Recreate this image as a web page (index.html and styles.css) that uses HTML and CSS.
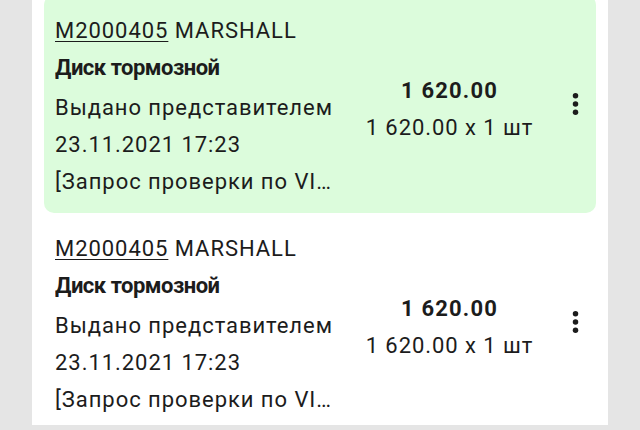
FILE: index.html
```html
<!DOCTYPE html>
<html lang="ru">
<head>
<meta charset="utf-8">
<link rel="stylesheet" href="styles.css">
</head>
<body>
<div class="panel">
  <div class="item item--active">
    <div class="info">
      <div class="line"><span class="code">M2000405</span> MARSHALL</div>
      <div class="line title">Диск тормозной</div>
      <div class="line">Выдано представителем</div>
      <div class="line">23.11.2021 17:23</div>
      <div class="line clip">[Запрос проверки по VI…</div>
    </div>
    <div class="price">
      <div class="total">1 620.00</div>
      <div class="unit">1 620.00 x 1 шт</div>
    </div>
    <div class="menu">
      <svg viewBox="0 0 24 24" width="36" height="36"><circle cx="12" cy="6" r="2"/><circle cx="12" cy="12" r="2"/><circle cx="12" cy="18" r="2"/></svg>
    </div>
  </div>
  <div class="item">
    <div class="info">
      <div class="line"><span class="code">M2000405</span> MARSHALL</div>
      <div class="line title">Диск тормозной</div>
      <div class="line">Выдано представителем</div>
      <div class="line">23.11.2021 17:23</div>
      <div class="line clip">[Запрос проверки по VI…</div>
    </div>
    <div class="price">
      <div class="total">1 620.00</div>
      <div class="unit">1 620.00 x 1 шт</div>
    </div>
    <div class="menu">
      <svg viewBox="0 0 24 24" width="36" height="36"><circle cx="12" cy="6" r="2"/><circle cx="12" cy="12" r="2"/><circle cx="12" cy="18" r="2"/></svg>
    </div>
  </div>
</div>
</body>
</html>
```
FILE: styles.css
```css
html, body {
  margin: 0;
  padding: 0;
  height: 100%;
  overflow: hidden;
}
body {
  background: #e5e5e5;
  font-family: Roboto, "Noto Sans", sans-serif;
  color: #1c1c1c;
}
.panel {
  width: 552px;
  margin-left: 32px;
  padding: 0 12px;
  height: 100%;
  background: #ffffff;
  margin-top: -5px;
}
.item {
  display: grid;
  grid-template-columns: 285px 219px 33px;
  align-items: center;
  padding: 17px 4px 13px 11px;
  border-radius: 10px;
}
.item--active {
  background: #dcfcdc;
}
.info {
  display: flex;
  flex-direction: column;
  min-width: 0;
}
.line {
  font-size: 22px;
  line-height: 37px;
  letter-spacing: 0.95px;
  white-space: nowrap;
  overflow: hidden;
  text-overflow: ellipsis;
}
.code {
  text-decoration: underline;
  text-underline-offset: 3px;
  text-decoration-thickness: 1px;
}
.title {
  font-size: 22px;
  font-weight: 700;
  letter-spacing: -0.5px;
  margin-bottom: 3px;
}
.price {
  display: flex;
  flex-direction: column;
  align-items: center;
  padding-top: 6px;
}
.total {
  font-size: 22px;
  line-height: 37px;
  font-weight: 700;
  letter-spacing: 1.2px;
}
.unit {
  font-size: 22px;
  line-height: 37px;
  letter-spacing: 0.95px;
}
.menu {
  display: flex;
  justify-content: center;
  align-items: center;
  margin-top: -4px;
}
.menu svg {
  fill: #1c1c1c;
  display: block;
}
```
